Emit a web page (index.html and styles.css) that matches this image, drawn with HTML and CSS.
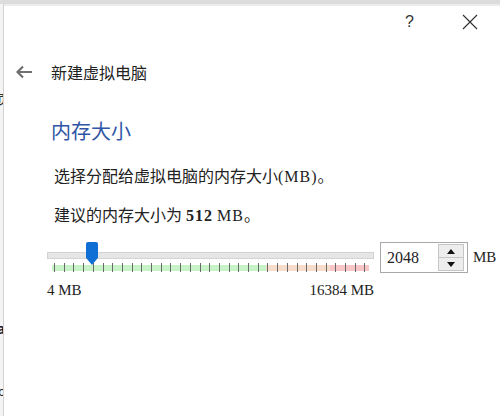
FILE: index.html
```html
<!DOCTYPE html>
<html lang="zh">
<head>
<meta charset="utf-8">
<link rel="stylesheet" href="styles.css">
</head>
<body>
<div class="screen">
  <div class="behind">
    <span class="behind-glyph g1">页</span>
    <span class="behind-glyph g2">a</span>
    <span class="behind-glyph g3">o</span>
  </div>
  <div class="dialog">
    <div class="titlebar">
      <span class="help">?</span>
      <svg class="close" width="16" height="16" viewBox="0 0 16 16"><path d="M1 1 L15 15 M15 1 L1 15" stroke="#333" stroke-width="1.2" fill="none"/></svg>
    </div>
    <div class="header">
      <svg class="back" width="18" height="14" viewBox="0 0 18 14"><path d="M17 7 H2.5 M8 1.5 L2.5 7 L8 12.5" stroke="#6f6f6f" stroke-width="2.2" fill="none"/></svg>
      <span class="title">新建虚拟电脑</span>
    </div>
    <div class="content">
      <h2 class="heading">内存大小</h2>
      <p class="text t1">选择分配给虚拟电脑的内存大小<span class="latin">(MB)</span>。</p>
      <p class="text t2">建议的内存大小为 <b class="latin">512</b> <span class="latin">MB</span>。</p>
      <div class="slider-row">
        <div class="slider">
          <div class="track">
            <div class="thumb" style="left: 38px"></div>
          </div>
          <div class="ticks"></div>
        </div>
        <div class="spin">
          <span class="spin-value">2048</span>
          <div class="spin-buttons">
            <div class="spin-btn up"><span class="tri-up"></span></div>
            <div class="spin-btn down"><span class="tri-down"></span></div>
          </div>
        </div>
        <span class="unit">MB</span>
      </div>
      <div class="labels">
        <span>4 MB</span>
        <span>16384 MB</span>
      </div>
    </div>
  </div>
</div>
</body>
</html>
```
FILE: styles.css
```css
html, body {
  margin: 0;
  padding: 0;
  background: #ffffff;
}
.screen {
  width: 500px;
  height: 416px;
  display: flex;
  overflow: hidden;
  border-top: 4px solid #dcdcdc;
  box-sizing: border-box;
  position: relative;
}
.screen::before {
  content: "";
  position: absolute;
  left: 0; right: 0; top: 0;
  height: 2px;
  background: #ececec;
}
.behind {
  width: 3px;
  flex: none;
  background: #f4f4f4;
  border-right: 1px solid #d2d2d2;
  position: relative;
  overflow: hidden;
}
.behind-glyph {
  position: absolute;
  right: 0;
  font-family: "Noto Sans CJK SC", sans-serif;
  font-size: 13px;
  color: #333;
  line-height: 1;
}
.g1 { top: 88px; right: -7px; }
.g2 { top: 318px; right: -2px; color: #223; font-weight: bold; }
.g3 { top: 380px; right: -3px; }
.dialog {
  flex: 1;
  display: flex;
  flex-direction: column;
  font-family: "Noto Sans CJK SC", sans-serif;
  color: #222;
}
.titlebar {
  height: 40px;
  display: flex;
  align-items: center;
  justify-content: flex-end;
  gap: 48px;
  padding-right: 22px;
}
.help {
  font-family: "Liberation Sans", sans-serif;
  font-size: 16px;
  color: #333;
  margin-top: -4px;
}
.close { margin-top: -4px; }
.header {
  height: 56px;
  display: flex;
  align-items: center;
  padding-left: 11px;
}
.back { margin-right: 18px; }
.title {
  font-size: 16px;
  color: #222;
}
.content {
  padding-left: 43px;
}
.heading {
  margin: 17px 0 0 4px;
  font-weight: normal;
  font-size: 20px;
  line-height: 28px;
  color: #2f56a6;
}
.text {
  margin: 0;
  font-family: "Liberation Serif", "Noto Sans CJK SC", serif;
  font-size: 16px;
  line-height: 20px;
  color: #222;
  padding-left: 7px;
}
.text .latin {
  letter-spacing: 1px;
}
.t1 { margin-top: 22px; }
.t2 { margin-top: 19px; }
.text b { font-weight: bold; }
.slider-row {
  margin-top: 16px;
  display: flex;
  align-items: flex-start;
}
.slider {
  width: 327px;
  padding-top: 10px;
}
.track {
  height: 5px;
  background: #e6e6e6;
  border: 1px solid #d2d2d2;
  position: relative;
}
.thumb {
  position: absolute;
  top: -11px;
  width: 12px;
  height: 23px;
  background: #0f6fd4;
  clip-path: polygon(0 0, 100% 0, 100% 68%, 50% 100%, 0 68%);
  border-radius: 2px 2px 0 0;
}
.ticks {
  margin: 4px 0 0 5px;
  width: 317px;
  height: 9px;
  background:
    repeating-linear-gradient(90deg, #6a6a6a 0 1px, transparent 1px 9.7px) 2px 0 / 100% 100% no-repeat,
    linear-gradient(90deg, #c8f2c8 0 214px, #f7dccb 214px 278px, #f8c6c6 278px) 0 2px / 100% 6px no-repeat;
}
.spin {
  margin-left: 6px;
  height: 29px;
  border: 1px solid #a8a8a8;
  background: #fff;
  display: flex;
  align-items: center;
  justify-content: space-between;
  padding: 0 3px 0 6px;
  box-sizing: content-box;
  width: 77px;
}
.spin-value {
  font-family: "Liberation Serif", serif;
  font-size: 16px;
  color: #222;
}
.spin-buttons {
  width: 24px;
  height: 25px;
  display: flex;
  flex-direction: column;
  border: 1px solid #c6c6c6;
  background: #ededed;
}
.spin-btn {
  flex: 1;
  display: flex;
  align-items: center;
  justify-content: center;
}
.spin-btn.up { border-bottom: 1px solid #c6c6c6; }
.tri-up {
  width: 0; height: 0;
  border-left: 4px solid transparent;
  border-right: 4px solid transparent;
  border-bottom: 5px solid #111;
}
.tri-down {
  width: 0; height: 0;
  border-left: 4px solid transparent;
  border-right: 4px solid transparent;
  border-top: 5px solid #111;
}
.unit {
  font-family: "Liberation Serif", serif;
  font-size: 15px;
  margin: 7px 0 0 5px;
  color: #222;
}
.labels {
  width: 327px;
  display: flex;
  justify-content: space-between;
  margin-top: 9px;
  font-family: "Liberation Serif", serif;
  font-size: 15px;
  color: #222;
}
```
